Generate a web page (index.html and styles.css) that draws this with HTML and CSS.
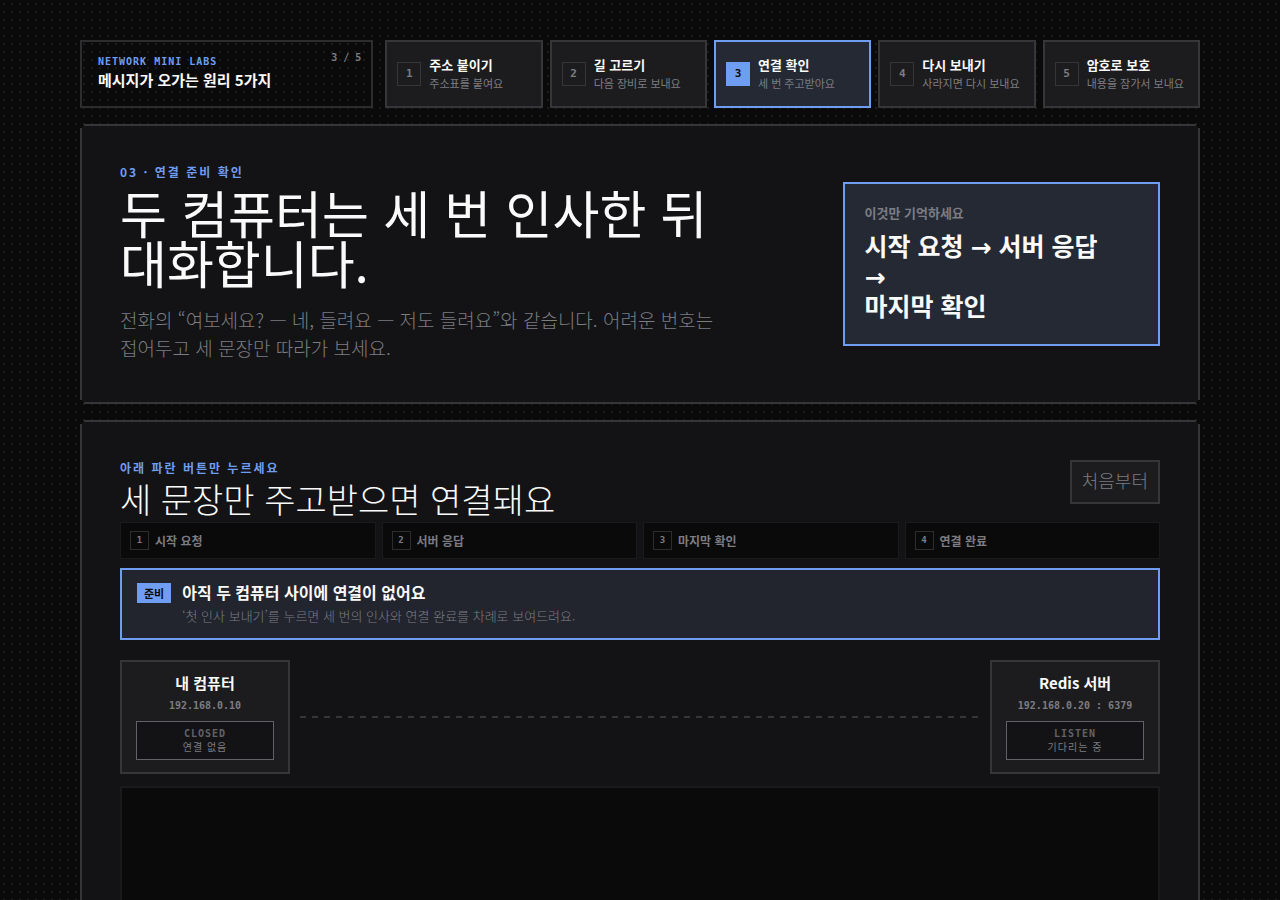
FILE: index.html
```html
<!DOCTYPE html>
<html lang="ko">
  <head>
    <meta charset="UTF-8" />
    <meta name="viewport" content="width=device-width, initial-scale=1.0" />
    <title>메시지가 오가는 원리 5가지</title>
    <link rel="stylesheet" href="styles.css">
  </head>
  <body>
    <div class="page">
      <header class="topbar">
        <div class="brand">
          <div>
            <p class="brand-label">NETWORK MINI LABS</p>
            <p class="brand-title">메시지가 오가는 원리 5가지</p>
          </div>
          <span class="brand-count">3 / 5</span>
        </div>

        <nav class="labs">
          <a class="lab" href="#lab-1">
            <span class="lab-number">1</span>
            <span class="lab-text"><strong>주소 붙이기</strong><small>주소표를 붙여요</small></span>
          </a>
          <a class="lab" href="#lab-2">
            <span class="lab-number">2</span>
            <span class="lab-text"><strong>길 고르기</strong><small>다음 장비로 보내요</small></span>
          </a>
          <a class="lab active" href="#lab-3" aria-current="page">
            <span class="lab-number">3</span>
            <span class="lab-text"><strong>연결 확인</strong><small>세 번 주고받아요</small></span>
          </a>
          <a class="lab" href="#lab-4">
            <span class="lab-number">4</span>
            <span class="lab-text"><strong>다시 보내기</strong><small>사라지면 다시 보내요</small></span>
          </a>
          <a class="lab" href="#lab-5">
            <span class="lab-number">5</span>
            <span class="lab-text"><strong>암호로 보호</strong><small>내용을 잠가서 보내요</small></span>
          </a>
        </nav>
      </header>

      <main>
        <section class="panel hero" id="lab-3">
          <div>
            <p class="eyebrow">03 · 연결 준비 확인</p>
            <h1>두 컴퓨터는 세 번 인사한 뒤 대화합니다.</h1>
            <p class="lead">
              전화의 “여보세요? — 네, 들려요 — 저도 들려요”와 같습니다. 어려운 번호는 접어두고 세 문장만 따라가 보세요.
            </p>
          </div>
          <aside class="remember">
            <p class="remember-label">이것만 기억하세요</p>
            <p class="remember-text">
              시작 요청 <span class="arrow">→</span> 서버 응답<br>
              <span class="arrow">→</span><br>
              마지막 확인
            </p>
          </aside>
        </section>

        <section class="panel lesson">
          <div class="lesson-head">
            <div>
              <p class="eyebrow">아래 파란 버튼만 누르세요</p>
              <h2>세 문장만 주고받으면 연결돼요</h2>
            </div>
            <button class="reset" type="button">처음부터</button>
          </div>

          <ol class="stages">
            <li><span class="stage-number">1</span>시작 요청</li>
            <li><span class="stage-number">2</span>서버 응답</li>
            <li><span class="stage-number">3</span>마지막 확인</li>
            <li><span class="stage-number">4</span>연결 완료</li>
          </ol>

          <div class="notice">
            <span class="notice-tag">준비</span>
            <div>
              <p class="notice-title">아직 두 컴퓨터 사이에 연결이 없어요</p>
              <p class="notice-text">‘첫 인사 보내기’를 누르면 세 번의 인사와 연결 완료를 차례로 보여드려요.</p>
            </div>
          </div>

          <div class="devices">
            <div class="device">
              <h3>내 컴퓨터</h3>
              <p class="address">192.168.0.10</p>
              <div class="state"><strong>CLOSED</strong><span>연결 없음</span></div>
            </div>
            <div class="wire"></div>
            <div class="device">
              <h3>Redis 서버</h3>
              <p class="address">192.168.0.20 : 6379</p>
              <div class="state"><strong>LISTEN</strong><span>기다리는 중</span></div>
            </div>
          </div>

          <div class="arena"></div>
        </section>
      </main>
    </div>
  </body>
</html>
```
FILE: styles.css
```css
:root {
  --bg: #0a0a0a;
  --panel: #131315;
  --card: #1c1c1e;
  --line: #363638;
  --line-soft: #1a1a1c;
  --text: #fafafa;
  --muted: #7c7c82;
  --blue: #6f9df2;
  --sans: "Noto Sans CJK KR", sans-serif;
  --mono: "DejaVu Sans Mono", "Noto Sans CJK KR", monospace;
}

* {
  margin: 0;
  padding: 0;
  box-sizing: border-box;
}

/* dot grid behind everything */
body {
  background-color: var(--bg);
  background-image: conic-gradient(from 270deg at 2px 2px, #1d1d1d 90deg, transparent 0);
  background-position: 3px 3px;
  background-size: 8px 8px;
  color: var(--text);
  font-family: var(--sans);
  word-break: keep-all;
}

.page {
  max-width: 1200px;
  margin: 0 auto;
  padding: 40px;
}

.topbar {
  display: grid;
  grid-template-columns: 9fr 25fr;
  gap: 12px;
  margin-bottom: 16px;
}

.brand {
  display: flex;
  justify-content: space-between;
  padding: 12px 10px 12px 16px;
  border: 2px solid #2d2d2f;
}

.brand-label {
  color: var(--blue);
  font: bold 10px/16px var(--mono);
  letter-spacing: 1px;
}

.brand-title {
  font-size: 15px;
  font-weight: bold;
  line-height: 20px;
}

.brand-count {
  color: var(--muted);
  font: bold 10px/8px var(--mono);
}

.labs {
  display: grid;
  grid-template-columns: repeat(5, 1fr);
  gap: 7px;
}

.lab {
  display: flex;
  align-items: center;
  gap: 8px;
  min-height: 68px;
  padding: 0 10px;
  border: 2px solid var(--line);
  background: var(--card);
  color: var(--text);
  text-decoration: none;
}

.lab-number {
  flex: none;
  width: 24px;
  border: 1px solid var(--line);
  color: var(--muted);
  font: bold 11px/22px var(--mono);
  text-align: center;
}

.lab-text strong,
.lab-text small {
  display: block;
  line-height: 19px;
  white-space: nowrap;
}

.lab-text strong {
  font-size: 13px;
}

.lab-text small {
  color: var(--muted);
  font-size: 11px;
}

.lab.active {
  border-color: var(--blue);
  background: #252934;
}

.lab.active .lab-number {
  border-color: var(--blue);
  background: var(--blue);
  color: #0a0a0a;
}

/* panel with notched pixel corners */
.panel {
  margin-bottom: 16px;
  padding: 38px;
  border: 2px solid var(--line);
  background: var(--panel);
  clip-path: polygon(
    0 4px, 2px 4px, 2px 2px, 4px 2px, 4px 0,
    calc(100% - 4px) 0, calc(100% - 4px) 2px, calc(100% - 2px) 2px, calc(100% - 2px) 4px, 100% 4px,
    100% calc(100% - 4px), calc(100% - 2px) calc(100% - 4px), calc(100% - 2px) calc(100% - 2px), calc(100% - 4px) calc(100% - 2px), calc(100% - 4px) 100%,
    4px 100%, 4px calc(100% - 2px), 2px calc(100% - 2px), 2px calc(100% - 4px), 0 calc(100% - 4px)
  );
}

.eyebrow {
  color: var(--blue);
  font-size: 12px;
  font-weight: bold;
  line-height: 16px;
  letter-spacing: 2px;
}

.hero {
  display: grid;
  grid-template-columns: 11fr 5fr;
  align-items: center;
  gap: 24px;
}

h1 {
  margin: 7px 0 19px;
  font-size: 51px;
  font-weight: 400;
  line-height: 50px;
}

.lead {
  max-width: 620px;
  padding-bottom: 2px;
  color: var(--muted);
  font-size: 19px;
  font-weight: 300;
  line-height: 28px;
}

.remember {
  padding: 20px 20px 24px;
  border: 2px solid var(--blue);
  background: #252934;
}

.remember-label {
  margin-bottom: 8px;
  color: var(--muted);
  font-size: 13px;
  font-weight: bold;
  line-height: 18px;
}

.remember-text {
  font-size: 25px;
  font-weight: bold;
  line-height: 30px;
}

.arrow {
  font-family: "DejaVu Sans", sans-serif;
  line-height: 20px;
}

.lesson-head {
  display: flex;
  justify-content: space-between;
  align-items: flex-start;
}

h2 {
  font-size: 34px;
  font-weight: 300;
  line-height: 46px;
}

.reset {
  height: 44px;
  padding: 0 10px 4px;
  border: 2px solid var(--line);
  background: var(--card);
  color: var(--muted);
  font-family: var(--sans);
  font-size: 18px;
  font-weight: 300;
  cursor: pointer;
}

.stages {
  display: grid;
  grid-template-columns: repeat(4, 1fr);
  gap: 6px;
  margin-bottom: 9px;
  list-style: none;
}

.stages li {
  display: flex;
  align-items: center;
  gap: 6px;
  padding: 8px 9px;
  border: 1px solid var(--line-soft);
  background: var(--bg);
  color: var(--muted);
  font-size: 12px;
  font-weight: bold;
  line-height: 18px;
}

.stage-number {
  width: 19px;
  border: 1px solid #2d2d2f;
  font: bold 9px/17px var(--mono);
  text-align: center;
}

.notice {
  display: flex;
  align-items: flex-start;
  gap: 11px;
  margin-bottom: 20px;
  padding: 11px 15px 10px;
  border: 2px solid var(--blue);
  background: #22252e;
}

.notice-tag {
  margin-top: 2px;
  padding: 0 7px;
  background: var(--blue);
  color: #0a0a0a;
  font-size: 11px;
  font-weight: bold;
  line-height: 20px;
}

.notice-title {
  font-size: 16px;
  font-weight: bold;
  line-height: 23px;
}

.notice-text {
  color: var(--muted);
  font-size: 13px;
  font-weight: 300;
  line-height: 24px;
}

.devices {
  display: flex;
  align-items: center;
  gap: 10px;
  margin-bottom: 12px;
}

.device {
  width: 170px;
  padding: 11px 14px 12px;
  border: 2px solid var(--line);
  background: var(--card);
  text-align: center;
}

h3 {
  font-size: 15px;
  line-height: 20px;
}

.address {
  margin: 6px 0 8px;
  color: var(--muted);
  font: bold 10px/14px var(--mono);
}

.state {
  padding: 5px 5px 6px;
  border: 1px solid #626266;
  background: var(--panel);
  color: var(--muted);
  font-size: 10px;
  line-height: 13px;
  letter-spacing: 1px;
}

.state strong,
.state span {
  display: block;
}

.state strong {
  color: #626266;
  font-family: var(--mono);
}

.wire {
  flex: 1;
  height: 2px;
  background: repeating-linear-gradient(90deg, var(--line) 0 6px, transparent 6px 12px);
}

.arena {
  min-height: 320px;
  border: 2px solid var(--line-soft);
  background: var(--bg);
}
```
